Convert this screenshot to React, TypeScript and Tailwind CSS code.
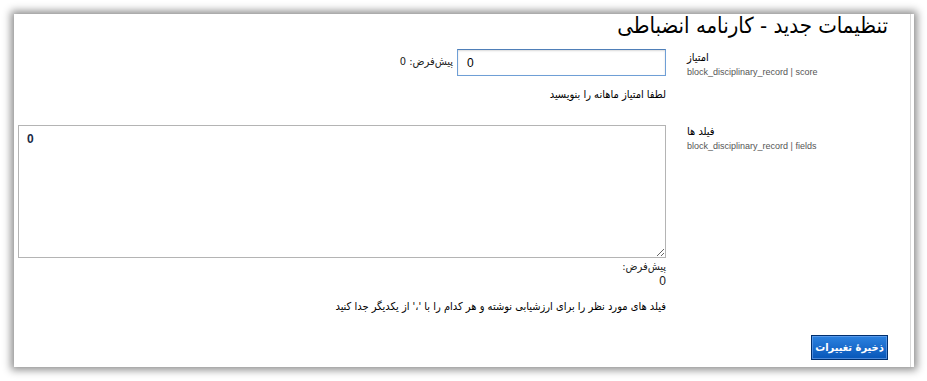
import React from "react";

const fa = { fontFamily: '"DejaVu Sans Condensed", "DejaVu Sans", sans-serif' };
const latin = { fontFamily: '"Liberation Sans", Arial, sans-serif' };

const Label: React.FC<{ title: string; name: string }> = ({ title, name }) => (
  <div className="w-[201px] shrink-0 text-left">
    <div className="text-[11px] leading-[14px] text-black" style={fa}>
      {title}
    </div>
    <div
      dir="ltr"
      className="mt-[1px] text-[9px] leading-[12px] text-[#555]"
      style={latin}
    >
      {name}
    </div>
  </div>
);

export default function App() {
  return (
    <div className="min-h-screen bg-white p-[14px]">
      <div className="h-[353px] w-[900px] bg-white pr-[3px] shadow-[0_0_8px_3px_rgba(0,0,0,0.45)]">
        <div dir="rtl" className="h-full border-r border-[#d8d8d8] pr-[22px]">
          <h2 className="text-[22px] leading-[24px] text-black" style={fa}>
            تنظیمات جدید - کارنامه انضباطی
          </h2>

          {/* score */}
          <div className="mt-[11px] flex gap-[21px]">
            <div className="pt-[2px]">
              <Label title="امتیاز" name="block_disciplinary_record | score" />
            </div>
            <div className="w-[648px]">
              <div className="flex items-center gap-[4px]">
                <input
                  dir="ltr"
                  defaultValue="0"
                  className="h-[27px] w-[209px] shrink-0 border border-[#6f9fd6] border-t-[#4f7fb8] bg-white px-[9px] text-[12px] text-black shadow-[inset_0_1px_2px_rgba(0,0,0,0.15)] outline-none"
                  style={latin}
                />
                <span className="text-[11px] text-[#222]" style={fa}>
                  پیش‌فرض: 0
                </span>
              </div>
              <div className="mt-[12px] text-[11px] leading-[14px] text-black" style={fa}>
                لطفا امتیاز ماهانه را بنویسید
              </div>
            </div>
          </div>

          {/* fields */}
          <div className="mt-[23px] flex gap-[21px]">
            <div>
              <Label title="فیلد ها" name="block_disciplinary_record | fields" />
            </div>
            <div className="w-[648px]">
              <textarea
                dir="ltr"
                defaultValue="0"
                className="block h-[133px] w-[648px] border border-[#b4b4b4] bg-white px-[8px] pt-[4px] text-[12px] font-bold text-[#1b2b45] outline-none"
                style={latin}
              />
              <div className="mt-[2px] text-[11px] leading-[14px] text-[#222]" style={fa}>
                پیش‌فرض:
              </div>
              <div className="text-[12px] leading-[15px] text-[#222]" style={latin}>
                0
              </div>
              <div className="mt-[11px] text-[11px] leading-[14px] text-black" style={fa}>
                فیلد های مورد نظر را برای ارزشیابی نوشته و هر کدام را با '،' از یکدیگر جدا کنید
              </div>
            </div>
          </div>

          <div className="mt-[19px]">
            <button
              className="h-[25px] w-[77px] whitespace-nowrap border border-[#00306f] bg-gradient-to-b from-[#2b82e0] to-[#0656b8] text-[11px] font-bold leading-[23px] text-white shadow-[inset_0_0_0_1px_rgba(120,170,240,0.6)]"
              style={fa}
            >
              ذخیرهٔ تغییرات
            </button>
          </div>
        </div>
      </div>
    </div>
  );
}
